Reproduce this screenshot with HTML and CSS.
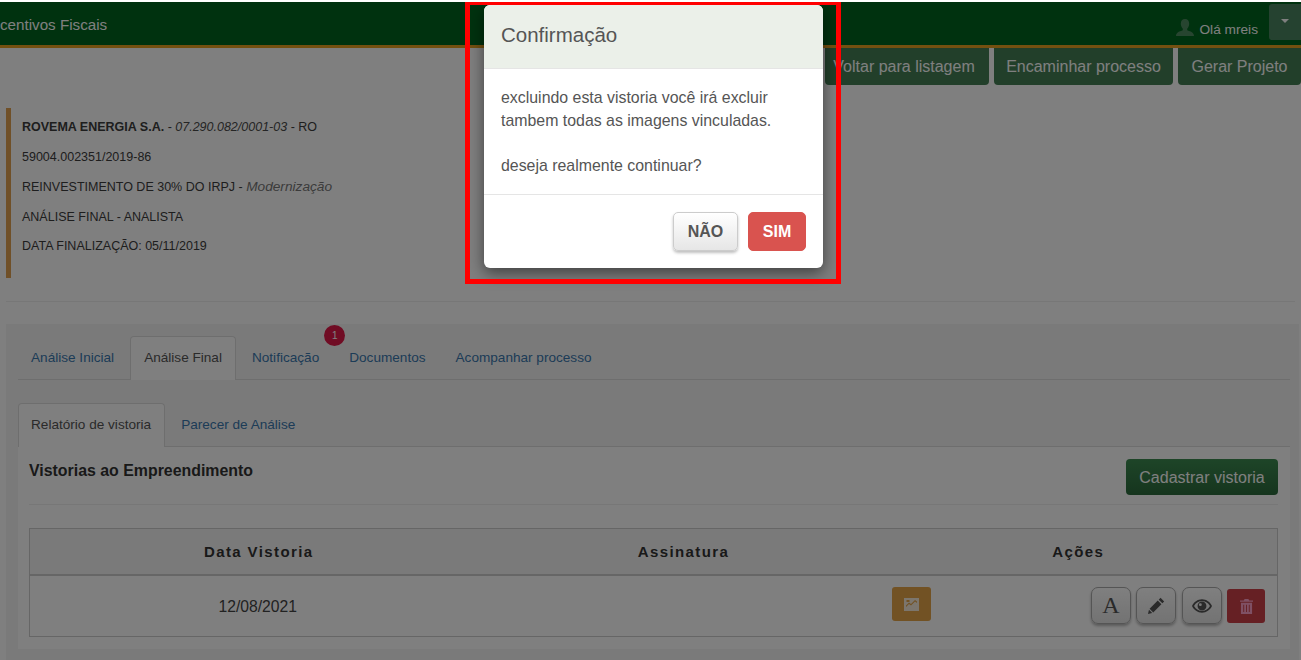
FILE: index.html
```html
<!DOCTYPE html>
<html lang="pt-br">
<head>
<meta charset="UTF-8" />
<meta name="viewport" content="width=device-width, initial-scale=1" />
<title>Incentivos Fiscais</title>
<link rel="stylesheet" href="styles.css">
</head>
<body>
<div class="screen">
    <header class="navbar">
        <span class="brand">centivos Fiscais</span>
        <div class="user">
            <svg class="user-icon" viewBox="0 0 18 17"><path d="M9 0c2.700 0 4.200 2 4.200 4.700 0 2-.9 3.900-2 5v1.600c1.500.8 6.800 1.500 6.800 5.700H0c0-4.200 5.300-4.900 6.800-5.700V9.700c-1.100-1.100-2-3-2-5C4.800 2 6.300 0 9 0z"/></svg>
            <span class="user-name">Olá mreis</span>
            <button class="user-menu" type="button"><span class="caret"></span></button>
        </div>
    </header>

    <div class="actions">
        <button class="btn-green" type="button">Voltar para listagem</button>
        <button class="btn-green" type="button">Encaminhar processo</button>
        <button class="btn-green" type="button">Gerar Projeto</button>
    </div>

    <div class="info">
        <div><b>ROVEMA ENERGIA S.A.</b> - <i>07.290.082/0001-03</i> - RO</div>
        <div>59004.002351/2019-86</div>
        <div>REINVESTIMENTO DE 30% DO IRPJ - <i class="muted">Modernização</i></div>
        <div>ANÁLISE FINAL - ANALISTA</div>
        <div>DATA FINALIZAÇÃO: 05/11/2019</div>
    </div>

    <hr class="divider">

    <section class="section">
        <ul class="tabs">
            <li><a href="#">Análise Inicial</a></li>
            <li class="active"><a href="#">Análise Final</a></li>
            <li class="has-badge"><a href="#">Notificação</a><span class="badge">1</span></li>
            <li><a href="#">Documentos</a></li>
            <li><a href="#">Acompanhar processo</a></li>
        </ul>
        <ul class="tabs sub-tabs">
            <li class="active"><a href="#">Relatório de vistoria</a></li>
            <li><a href="#">Parecer de Análise</a></li>
        </ul>
        <div class="panel">
            <div class="panel-head">
                <h4>Vistorias ao Empreendimento</h4>
                <button class="btn-green btn-add" type="button">Cadastrar vistoria</button>
            </div>
            <table class="grid">
                <thead>
                    <tr>
                        <th class="col-date">Data Vistoria</th>
                        <th class="col-sign">Assinatura</th>
                        <th class="col-acts">Ações</th>
                    </tr>
                </thead>
                <tbody>
                    <tr>
                        <td class="cell-date">12/08/2021</td>
                        <td class="cell-image">
                            <button class="btn-image" type="button">
                                <svg viewBox="0 0 15 13"><path fill-rule="evenodd" d="M0 0h15v13H0zM2 9l3-3 2 1.500 4-4 2 1.500V3.500L11 2 7 6 5 4.500l-3 3zM2.500 2h3v2h-3z"/></svg>
                            </button>
                        </td>
                        <td class="cell-acts">
                            <button class="btn-icon btn-letter" type="button">A</button>
                            <button class="btn-icon" type="button">
                                <svg viewBox="0 0 16 16"><path d="M11.800.8l3.400 3.400-1.700 1.700-3.400-3.400zM9.200 3.400l3.400 3.400-7.700 7.700-3.400-3.400zM.9 12l3.100 3.100-4 .9z"/></svg>
                            </button>
                            <button class="btn-icon" type="button">
                                <svg class="eye" viewBox="0 0 18 12"><path fill-rule="evenodd" d="M9 0c4 0 7.300 2.500 9 6-1.700 3.500-5 6-9 6s-7.300-2.500-9-6c1.700-3.500 5-6 9-6zM9 1.500C6.600 1.500 3.400 3.100 1.800 6c1.600 2.900 4.800 4.500 7.200 4.500s5.600-1.600 7.200-4.500C14.600 3.100 11.400 1.500 9 1.500zM9 2a4 4 0 1 1 0 8 4 4 0 0 1 0-8zM7.500 3.500a1.300 1.300 0 1 0 0 2.600 1.300 1.300 0 0 0 0-2.600z"/></svg>
                            </button>
                            <button class="btn-trash" type="button">
                                <svg viewBox="0 0 14 16"><path fill-rule="evenodd" d="M5 0h4l1 1.500h4V3H0V1.500h4zM1 4h12v12H1zM3.500 6v8h1V6zM6.500 6v8h1V6zM9.500 6v8h1V6z"/></svg>
                            </button>
                        </td>
                    </tr>
                </tbody>
            </table>
        </div>
    </section>

    <div class="backdrop"></div>

    <div class="modal">
        <div class="modal-header">Confirmação</div>
        <div class="modal-body">
            excluindo esta vistoria você irá excluir<br>
            tambem todas as imagens vinculadas.<br>
            <br>
            deseja realmente continuar?
        </div>
        <div class="modal-footer">
            <button class="btn-no" type="button">NÃO</button>
            <button class="btn-yes" type="button">SIM</button>
        </div>
    </div>

    <div class="highlight"></div>
</div>
</body>
</html>
```

FILE: styles.css
```css
* { box-sizing: border-box; }
html, body { margin: 0; height: 100%; background: #fff; }
body { font-family: "Liberation Sans", Arial, sans-serif; color: #333; overflow: hidden; }
button { font-family: inherit; cursor: pointer; }

.screen { position: relative; margin-top: 2px; height: 658px; overflow: hidden; background: #fff; }

/* topo */
.navbar { display: flex; justify-content: space-between; height: 46px; background: #00641e; border-bottom: 3px solid #e8a020; color: #fff; }
.brand { font-size: 15.2px; line-height: 46px; }
.user { display: flex; align-items: flex-start; }
.user-icon { width: 18px; height: 17px; margin: 17px 5px 0 0; fill: #4f8a60; }
.user-name { margin-top: 20px; font-size: 13.7px; line-height: 15px; }
.user-menu { width: 32px; height: 36px; margin: 2px 0 0 11px; padding: 0; background: #4a8560; border: 0; border-radius: 3px 0 0 3px; }
.caret { display: block; width: 0; margin: 0 auto 2px; border: 4px solid transparent; border-top: 4px solid #fff; border-bottom: 0; }

.btn-green { height: 37px; padding: 1px 0 0; background: #447f55; border: 0; border-radius: 0 0 4px 4px; color: #fff; font-size: 16px; }
.actions { display: flex; justify-content: flex-end; gap: 5px; }
.actions .btn-green:nth-child(1) { width: 164px; padding-right: 6px; }
.actions .btn-green:nth-child(2) { width: 179px; }
.actions .btn-green:nth-child(3) { width: 123px; }

/* dados do processo */
.info { height: 170px; margin: 23px 0 0 6px; padding: 5.400px 0 0 11px; border-left: 5px solid #e0a050; color: #3c3c3c; font-size: 12.5px; line-height: 29.5px; }
.info i { color: #4a4a4a; }
.info .muted { color: #777; font-size: 13.7px; }
.divider { height: 1px; margin: 23px 6px 0; background: #eee; border: 0; }

.section { height: 340px; margin: 22px 2px 0 6px; padding: 12px 9px 0 12px; background: #f5f5f5; }

.tabs { display: flex; height: 44px; margin: 0; padding: 0; list-style: none; border-bottom: 1px solid #ddd; font-size: 13.6px; }
.tabs li { position: relative; display: flex; align-items: center; height: 44px; padding-bottom: 2px; }
.tabs a { padding: 0 15px; color: #3a78ae; text-decoration: none; }
.tabs li:first-child a { padding: 0 16px 0 13px; }
.tabs .active { margin-right: 1px; background: #fff; border: 1px solid #ddd; border-bottom: 0; border-radius: 4px 4px 0 0; }
.tabs .active a { padding: 0 13px; color: #555; }
.tabs.sub-tabs li:first-child a { padding: 0 13px 0 12px; }
.badge { position: absolute; top: -11px; right: -11px; width: 21px; height: 21px; background: #e01848; border-radius: 50%; color: #fff; font-size: 10px; line-height: 21px; text-align: center; }
.sub-tabs { margin-top: 23px; }

.panel { height: 202px; padding: 12px 12px 0 11px; background: #fff; }
.panel-head { display: flex; justify-content: space-between; height: 46px; border-bottom: 1px solid #eee; }
.panel-head h4 { margin: 3px 0 0; font-size: 15.9px; line-height: 18px; }
.btn-add { width: 152px; height: 36px; background: linear-gradient(#3c8a50, #2c6a3c); border-radius: 4px; }

.grid { width: 100%; height: 109px; margin-top: 23px; border-collapse: collapse; border: 1px solid #ccc; table-layout: fixed; color: #444; font-size: 15.7px; text-align: center; }
.grid th { height: 46px; padding: 0; border-bottom: 2px solid #ccc; background: #f5f5f5; color: #333; font-size: 15px; letter-spacing: 1.4px; }
.col-date { width: 458px; }
.col-sign { width: 392px; }
.cell-date { padding: 2px 2px 0 0; }
.cell-image { padding-left: 66px; }
.btn-image { display: block; width: 39px; height: 34px; margin: -4px 0 0 338px; padding: 0; background: #e4a448; border: 0; border-radius: 3px; }
.btn-image svg { width: 15px; height: 13px; fill: #fff; opacity: .8; vertical-align: middle; }

.cell-acts { padding-right: 12px; text-align: right; }
.cell-acts button { vertical-align: middle; }
.btn-icon { width: 40px; height: 37px; margin-right: 1px; padding: 0; background: linear-gradient(#fff, #e6e6e6); border: 1px solid #aaa; border-radius: 7px; box-shadow: 0 2px 3px rgba(0,0,0,.3); color: #555; }
.btn-icon svg { width: 17px; height: 17px; fill: #555; vertical-align: middle; }
.btn-icon .eye { width: 20px; height: 14px; }
.btn-letter { font-family: "Liberation Serif", serif; font-size: 24px; }
.btn-trash { width: 38px; height: 34px; padding: 0; background: #cc4048; border: 0; border-radius: 3px; }
.btn-trash svg { width: 13px; height: 15px; fill: #ffa0c8; vertical-align: middle; }

/* sobreposicao */
.backdrop { position: absolute; top: 0; left: 0; right: 0; bottom: 0; background: rgba(0,0,0,.5); }

.modal { position: absolute; top: 3px; left: 484px; width: 339px; height: 263px; background: #fff; border-radius: 6px; box-shadow: 0 5px 15px rgba(0,0,0,.5); overflow: hidden; color: #555; }
.modal-header { height: 64px; padding-left: 17px; background: #ebf0e9; border-bottom: 1px solid #e5e5e5; font-size: 20.5px; line-height: 60px; }
.modal-body { height: 126px; padding: 18px 17px 0; border-bottom: 1px solid #e5e5e5; font-size: 15.9px; line-height: 22.7px; }
.modal-footer { display: flex; justify-content: flex-end; gap: 10px; padding: 17px 17px 0; }
.btn-no, .btn-yes { height: 39px; padding: 0; border-radius: 5px; font-size: 16px; font-weight: bold; }
.btn-no { width: 65px; background: linear-gradient(#fff, #e6e6e6); border: 1px solid #ccc; box-shadow: 0 2px 3px rgba(0,0,0,.25); color: #555; }
.btn-yes { width: 58px; background: #d9534f; border: 1px solid #d9534f; color: #fff; }

.highlight { position: absolute; top: -2px; left: 465px; width: 376px; height: 284px; border: 5px solid #f00; pointer-events: none; }
```
